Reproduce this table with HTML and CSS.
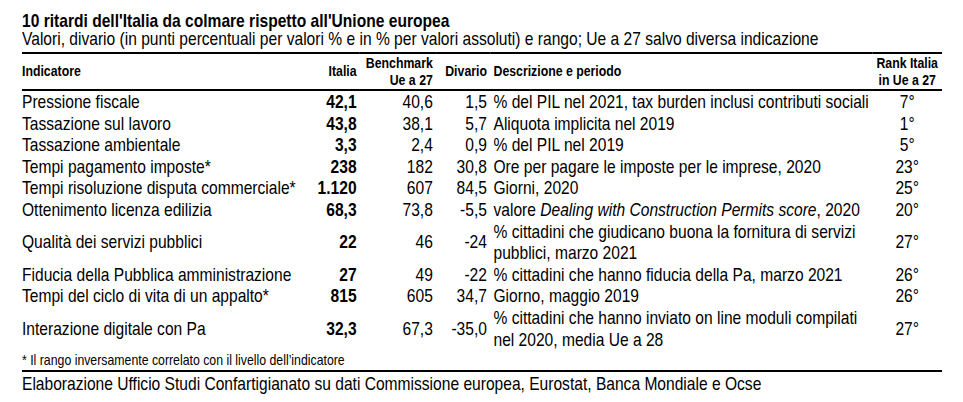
FILE: index.html
```html
<!DOCTYPE html>
<html lang="it">
<head>
<meta charset="utf-8">
<title>10 ritardi dell'Italia</title>
<link rel="stylesheet" href="styles.css">
</head>
<body>
<div class="frame">
<div class="sheet">
  <h1 class="title">10 ritardi dell'Italia da colmare rispetto all'Unione europea</h1>
  <p class="subtitle">Valori, divario (in punti percentuali per valori % e in % per valori assoluti) e rango; Ue a 27 salvo diversa indicazione</p>
  <table class="data">
    <colgroup>
      <col class="c-ind"><col class="c-it"><col class="c-bm"><col class="c-div"><col class="c-desc"><col class="c-rank">
    </colgroup>
    <thead>
      <tr>
        <th class="ind">Indicatore</th>
        <th class="num">Italia</th>
        <th class="num">Benchmark<br>Ue a 27</th>
        <th class="num">Divario</th>
        <th class="desc">Descrizione e periodo</th>
        <th class="rank">Rank Italia<br>in Ue a 27</th>
      </tr>
    </thead>
    <tbody>
      <tr><td class="ind">Pressione fiscale</td><td class="num it">42,1</td><td class="num">40,6</td><td class="num">1,5</td><td class="desc">% del PIL nel 2021, tax burden inclusi contributi sociali</td><td class="rank">7°</td></tr>
      <tr><td class="ind">Tassazione sul lavoro</td><td class="num it">43,8</td><td class="num">38,1</td><td class="num">5,7</td><td class="desc">Aliquota implicita nel 2019</td><td class="rank">1°</td></tr>
      <tr><td class="ind">Tassazione ambientale</td><td class="num it">3,3</td><td class="num">2,4</td><td class="num">0,9</td><td class="desc">% del PIL nel 2019</td><td class="rank">5°</td></tr>
      <tr><td class="ind">Tempi pagamento imposte*</td><td class="num it">238</td><td class="num">182</td><td class="num">30,8</td><td class="desc">Ore per pagare le imposte per le imprese, 2020</td><td class="rank">23°</td></tr>
      <tr><td class="ind">Tempi risoluzione disputa commerciale*</td><td class="num it">1.120</td><td class="num">607</td><td class="num">84,5</td><td class="desc">Giorni, 2020</td><td class="rank">25°</td></tr>
      <tr><td class="ind">Ottenimento licenza edilizia</td><td class="num it">68,3</td><td class="num">73,8</td><td class="num">-5,5</td><td class="desc">valore <i>Dealing with Construction Permits score</i>, 2020</td><td class="rank">20°</td></tr>
      <tr><td class="ind">Qualità dei servizi pubblici</td><td class="num it">22</td><td class="num">46</td><td class="num">-24</td><td class="desc">% cittadini che giudicano buona la fornitura di servizi<br>pubblici, marzo 2021</td><td class="rank">27°</td></tr>
      <tr><td class="ind">Fiducia della Pubblica amministrazione</td><td class="num it">27</td><td class="num">49</td><td class="num">-22</td><td class="desc">% cittadini che hanno fiducia della Pa, marzo 2021</td><td class="rank">26°</td></tr>
      <tr><td class="ind">Tempi del ciclo di vita di un appalto*</td><td class="num it">815</td><td class="num">605</td><td class="num">34,7</td><td class="desc">Giorno, maggio 2019</td><td class="rank">26°</td></tr>
      <tr><td class="ind">Interazione digitale con Pa</td><td class="num it">32,3</td><td class="num">67,3</td><td class="num">-35,0</td><td class="desc">% cittadini che hanno inviato on line moduli compilati<br>nel 2020, media Ue a 28</td><td class="rank">27°</td></tr>
    </tbody>
  </table>
  <p class="note">* Il rango inversamente correlato con il livello dell’indicatore</p>
  <p class="source">Elaborazione Ufficio Studi Confartigianato su dati Commissione europea, Eurostat, Banca Mondiale e Ocse</p>
</div>
</div>
</body>
</html>
```

FILE: styles.css
```css
html {
  overflow: hidden;
}

html, body {
  margin: 0;
  padding: 0;
  background: #fff;
  color: #000;
}

body {
  padding: 0 0 0 22px;
  font-family: "Liberation Sans Narrow", "Arial Narrow", "Liberation Sans", Arial, sans-serif;
}

/* the visible sheet is 920px wide */
.frame {
  width: 920px;
  padding-top: 12px;
  overflow: hidden;
}

/* Arial Narrow look: Liberation Sans condensed to 82% width */
.sheet {
  width: 1122px;
  margin-right: -202px;
  transform: scaleX(0.82);
  transform-origin: 0 0;
  white-space: nowrap;
}

.title {
  margin: 0;
  font-size: 19px;
  line-height: 18px;
  font-weight: bold;
}

.subtitle {
  margin: 0 0 4px;
  font-size: 19px;
  line-height: 18px;
}

.data {
  width: 1122px;
  border-collapse: collapse;
  table-layout: fixed;
  border-top: 2px solid #000;
}

.c-ind { width: 339px; }
.c-it { width: 73px; }
.c-bm { width: 93px; }
.c-div { width: 66px; }
.c-desc { width: 466px; }
.c-rank { width: 85px; }

.data th {
  height: 35px;
  padding: 0;
  font-size: 15px;
  line-height: 16.5px;
  font-weight: bold;
  vertical-align: middle;
  border-bottom: 2px solid #000;
}

.data td {
  padding: 0;
  font-size: 19px;
  line-height: 21.6px;
  vertical-align: middle;
}

.ind { text-align: left; }
.num { text-align: right; }
.data .num { padding-right: 4px; }
.desc { text-align: left; }
.data .desc { padding-left: 4px; }
.rank { text-align: center; }
.it { font-weight: bold; }

.note {
  margin: 0;
  font-size: 15px;
  line-height: 20px;
  height: 20px;
}

.source {
  margin: 0;
  border-top: 2px solid #000;
  font-size: 19px;
  line-height: 24px;
}
```
